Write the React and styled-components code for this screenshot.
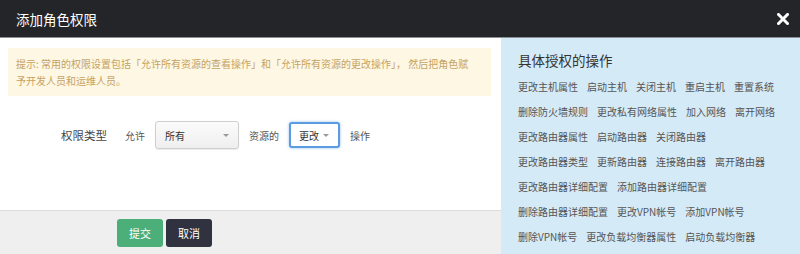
import styled, { createGlobalStyle } from "styled-components";

const GlobalStyle = createGlobalStyle`
  html, body {
    margin: 0;
    padding: 0;
    width: 800px;
    height: 254px;
    overflow: hidden;
    font-family: "Noto Sans CJK SC", "Liberation Sans", sans-serif;
    background: #fff;
  }
`;

const operations = [
  ["更改主机属性", "启动主机", "关闭主机", "重启主机", "重置系统"],
  ["删除防火墙规则", "更改私有网络属性", "加入网络", "离开网络"],
  ["更改路由器属性", "启动路由器", "关闭路由器"],
  ["更改路由器类型", "更新路由器", "连接路由器", "离开路由器"],
  ["更改路由器详细配置", "添加路由器详细配置"],
  ["删除路由器详细配置", "更改VPN帐号", "添加VPN帐号"],
  ["删除VPN帐号", "更改负载均衡器属性", "启动负载均衡器"],
];

function App() {
  return (
    <>
      <GlobalStyle />
      <Dialog>
        <Header>
          <Title>添加角色权限</Title>
          <Close>
            <svg width="12" height="12" viewBox="0 0 12 12">
              <path d="M1.5 1.5 L10.5 10.5 M10.5 1.5 L1.5 10.5" stroke="#fff" strokeWidth="3" strokeLinecap="square" />
            </svg>
          </Close>
        </Header>
        <Body>
          <LeftPane>
            <Notice>
              <NoticeLine>提示: 常用的权限设置包括「允许所有资源的查看操作」和「允许所有资源的更改操作」， 然后把角色赋</NoticeLine>
              <NoticeLine>予开发人员和运维人员。</NoticeLine>
            </Notice>
            <FormArea>
              <FormRow>
                <FieldLabel>权限类型</FieldLabel>
                <Word>允许</Word>
                <Select width={84}>
                  <span>所有</span>
                  <Caret />
                </Select>
                <Word>资源的</Word>
                <Select width={51} focused>
                  <span>更改</span>
                  <Caret />
                </Select>
                <Word>操作</Word>
              </FormRow>
            </FormArea>
            <Footer>
              <Button kind="primary">提交</Button>
              <Button>取消</Button>
            </Footer>
          </LeftPane>
          <RightPane>
            <SideTitle>具体授权的操作</SideTitle>
            {operations.map((row, i) => (
              <OpRow key={i}>
                {row.map((op) => (
                  <Op key={op}>{op}</Op>
                ))}
              </OpRow>
            ))}
          </RightPane>
        </Body>
      </Dialog>
    </>
  );
}

const Dialog = styled.div`
  width: 800px;
  height: 254px;
  display: flex;
  flex-direction: column;
`;

const Header = styled.div`
  height: 38px;
  flex-shrink: 0;
  background: #232528;
  border-bottom: 1px solid #8b8e92;
  box-sizing: border-box;
  display: flex;
  align-items: center;
  justify-content: space-between;
  padding: 0 11px 0 16px;
`;

const Title = styled.div`
  color: #fff;
  font-size: 13.5px;
`;

const Close = styled.div`
  display: flex;
  align-items: center;
`;

const Body = styled.div`
  flex: 1;
  display: flex;
  min-height: 0;
`;

const LeftPane = styled.div`
  width: 501px;
  display: flex;
  flex-direction: column;
  background: #fff;
`;

const Notice = styled.div`
  margin: 10px 10px 0 8px;
  padding: 7px 8px;
  background: #fdf7e4;
  color: #c7a262;
  font-size: 10px;
  line-height: 17px;
  overflow: hidden;
`;

const NoticeLine = styled.div`
  white-space: nowrap;
`;

const FormArea = styled.div`
  flex: 1;
`;

const FormRow = styled.div`
  display: flex;
  align-items: center;
  margin-top: 25px;
  padding-left: 61px;
`;

const FieldLabel = styled.div`
  font-size: 11.5px;
  color: #444;
  margin-right: 18px;
`;

const Word = styled.div`
  font-size: 10px;
  color: #555;
  margin-right: 10px;
`;

const Select = styled.div`
  position: relative;
  box-sizing: border-box;
  width: ${(p) => p.width}px;
  height: ${(p) => (p.focused ? 26 : 28)}px;
  margin-right: 10px;
  padding-left: ${(p) => (p.focused ? 8 : 9)}px;
  display: flex;
  align-items: center;
  font-size: 10px;
  color: #333;
  border-radius: 3px;
  border: ${(p) => (p.focused ? "2px solid #5b9be0" : "1px solid #cfcfcf")};
  background: ${(p) =>
    p.focused ? "#fff" : "linear-gradient(#fbfbfb, #efefef)"};
  box-shadow: ${(p) =>
    p.focused ? "0 0 3px rgba(80,150,230,0.6)" : "0 1px 1px rgba(0,0,0,0.08)"};
`;

const Caret = styled.span`
  position: absolute;
  right: 9px;
  top: 50%;
  margin-top: -1px;
  width: 0;
  height: 0;
  border-left: 3px solid transparent;
  border-right: 3px solid transparent;
  border-top: 3px solid #999;
`;

const Footer = styled.div`
  height: 44px;
  box-sizing: border-box;
  background: #efefef;
  border-top: 1px solid #dddddd;
  display: flex;
  gap: 3px;
  padding: 8px 0 0 117px;
`;

const Button = styled.div`
  width: 46px;
  height: 28px;
  border-radius: 3px;
  display: flex;
  align-items: center;
  justify-content: center;
  font-size: 11px;
  color: #fff;
  background: ${(p) => (p.kind === "primary" ? "#4cae78" : "#30333f")};
`;

const RightPane = styled.div`
  flex: 1;
  background: #d5eaf7;
  padding: 12px 10px 0 17px;
  overflow: hidden;
`;

const SideTitle = styled.div`
  font-size: 13.5px;
  line-height: 20px;
  color: #333;
  margin-bottom: 4px;
`;

const OpRow = styled.div`
  display: flex;
  gap: 9px;
  height: 25px;
  align-items: center;
`;

const Op = styled.span`
  font-size: 10px;
  color: #555;
  white-space: nowrap;
`;

export default App;
